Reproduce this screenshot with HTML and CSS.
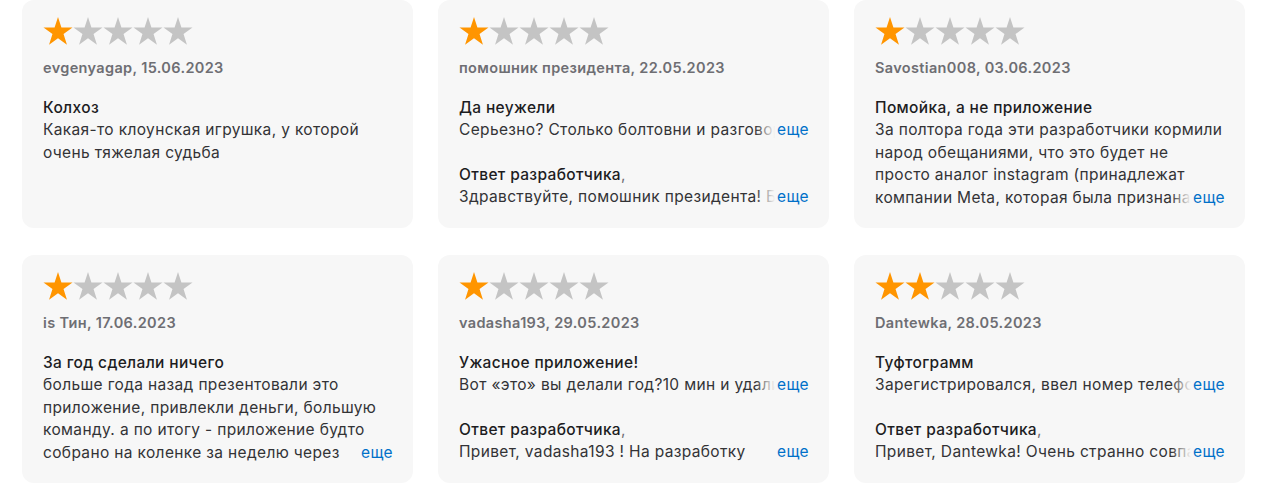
FILE: index.html
```html
<!DOCTYPE html>
<html lang="ru">
<head>
<meta charset="utf-8">
<title>Отзывы</title>
<link rel="stylesheet" href="styles.css">
</head>
<body>
<svg class="defs" width="0" height="0" aria-hidden="true">
  <defs>
    <polygon id="star" points="15,0.05 18.42,10.59 29.5,10.59 20.54,17.1 23.96,27.64 15,21.13 6.04,27.64 9.46,17.1 0.5,10.59 11.58,10.59"/>
  </defs>
</svg>
<main class="reviews">

  <article class="card">
    <div class="stars">
      <svg class="star on" viewBox="0 0 30 28"><use href="#star"/></svg>
      <svg class="star" viewBox="0 0 30 28"><use href="#star"/></svg>
      <svg class="star" viewBox="0 0 30 28"><use href="#star"/></svg>
      <svg class="star" viewBox="0 0 30 28"><use href="#star"/></svg>
      <svg class="star" viewBox="0 0 30 28"><use href="#star"/></svg>
    </div>
    <div class="author">evgenyagap, 15.06.2023</div>
    <h3 class="title">Колхоз</h3>
    <div class="body">Какая-то клоунская игрушка, у которой очень тяжелая судьба</div>
  </article>

  <article class="card">
    <div class="stars">
      <svg class="star on" viewBox="0 0 30 28"><use href="#star"/></svg>
      <svg class="star" viewBox="0 0 30 28"><use href="#star"/></svg>
      <svg class="star" viewBox="0 0 30 28"><use href="#star"/></svg>
      <svg class="star" viewBox="0 0 30 28"><use href="#star"/></svg>
      <svg class="star" viewBox="0 0 30 28"><use href="#star"/></svg>
    </div>
    <div class="author">помошник президента, 22.05.2023</div>
    <h3 class="title">Да неужели</h3>
    <div class="body clamp one">Серьезно? Столько болтовни и разговоров про это приложение<a class="more" href="#">еще</a></div>
    <h3 class="title reply">Ответ разработчика<span class="comma">,</span></h3>
    <div class="body clamp one">Здравствуйте, помошник президента! Благодарим за отзыв<a class="more" href="#">еще</a></div>
  </article>

  <article class="card">
    <div class="stars">
      <svg class="star on" viewBox="0 0 30 28"><use href="#star"/></svg>
      <svg class="star" viewBox="0 0 30 28"><use href="#star"/></svg>
      <svg class="star" viewBox="0 0 30 28"><use href="#star"/></svg>
      <svg class="star" viewBox="0 0 30 28"><use href="#star"/></svg>
      <svg class="star" viewBox="0 0 30 28"><use href="#star"/></svg>
    </div>
    <div class="author">Savostian008, 03.06.2023</div>
    <h3 class="title">Помойка, а не приложение</h3>
    <div class="body clamp four">За полтора года эти разработчики кормили народ обещаниями, что это будет не просто аналог instagram (принадлежат компании Meta, которая была признана экстремистской организацией) <a class="more" href="#">еще</a></div>
  </article>

  <article class="card">
    <div class="stars">
      <svg class="star on" viewBox="0 0 30 28"><use href="#star"/></svg>
      <svg class="star" viewBox="0 0 30 28"><use href="#star"/></svg>
      <svg class="star" viewBox="0 0 30 28"><use href="#star"/></svg>
      <svg class="star" viewBox="0 0 30 28"><use href="#star"/></svg>
      <svg class="star" viewBox="0 0 30 28"><use href="#star"/></svg>
    </div>
    <div class="author">is Тин, 17.06.2023</div>
    <h3 class="title">За год сделали ничего</h3>
    <div class="body clamp four">больше года назад презентовали это приложение, привлекли деньги, большую команду. а по итогу - приложение будто собрано на коленке за неделю через неработающие сервисы <a class="more" href="#">еще</a></div>
  </article>

  <article class="card">
    <div class="stars">
      <svg class="star on" viewBox="0 0 30 28"><use href="#star"/></svg>
      <svg class="star" viewBox="0 0 30 28"><use href="#star"/></svg>
      <svg class="star" viewBox="0 0 30 28"><use href="#star"/></svg>
      <svg class="star" viewBox="0 0 30 28"><use href="#star"/></svg>
      <svg class="star" viewBox="0 0 30 28"><use href="#star"/></svg>
    </div>
    <div class="author">vadasha193, 29.05.2023</div>
    <h3 class="title">Ужасное приложение!</h3>
    <div class="body clamp one">Вот «это» вы делали год?10 мин и удалил приложение<a class="more" href="#">еще</a></div>
    <h3 class="title reply">Ответ разработчика<span class="comma">,</span></h3>
    <div class="body clamp onewrap">Привет, vadasha193 ! На разработку приложения ушло много времени <a class="more" href="#">еще</a></div>
  </article>

  <article class="card">
    <div class="stars">
      <svg class="star on" viewBox="0 0 30 28"><use href="#star"/></svg>
      <svg class="star on" viewBox="0 0 30 28"><use href="#star"/></svg>
      <svg class="star" viewBox="0 0 30 28"><use href="#star"/></svg>
      <svg class="star" viewBox="0 0 30 28"><use href="#star"/></svg>
      <svg class="star" viewBox="0 0 30 28"><use href="#star"/></svg>
    </div>
    <div class="author">Dantewka, 28.05.2023</div>
    <h3 class="title">Туфтограмм</h3>
    <div class="body clamp one">Зарегистрировался, ввел номер телефона и ничего не пришло<a class="more" href="#">еще</a></div>
    <h3 class="title reply">Ответ разработчика<span class="comma">,</span></h3>
    <div class="body clamp one">Привет, Dantewka! Очень странно совпадение, давайте разберемся<a class="more" href="#">еще</a></div>
  </article>

</main>
</body>
</html>
```

FILE: styles.css
```css
* {
  box-sizing: border-box;
}

html, body {
  margin: 0;
  padding: 0;
  background: #ffffff;
}

body {
  font-family: Inter, "Noto Sans", "Liberation Sans", sans-serif;
  color: #1d1d1f;
  letter-spacing: 0.35px;
  -webkit-font-smoothing: antialiased;
}

.defs {
  position: absolute;
  width: 0;
  height: 0;
  overflow: hidden;
}

.reviews {
  display: grid;
  grid-template-columns: repeat(3, 391px);
  grid-auto-rows: 228px;
  column-gap: 25px;
  row-gap: 27px;
  padding: 0 0 0 22px;
}

.card {
  background: #f7f7f7;
  border-radius: 12px;
  padding: 17px 20px 0 21px;
  overflow: hidden;
}

.stars {
  display: flex;
  height: 28px;
}

.star {
  width: 30px;
  height: 28px;
  display: block;
  fill: #c4c4c4;
}

.star.on {
  fill: #ff9500;
}

.author {
  margin-top: 13px;
  font-size: 14.5px;
  line-height: 20px;
  font-weight: 600;
  color: #6e6e73;
}

.title {
  margin: 19px 0 0;
  font-size: 15.5px;
  line-height: 22px;
  font-weight: 500;
  color: #1d1d1f;
}

.title.reply {
  margin-top: 22px;
}

.title .comma {
  font-weight: 400;
  color: #6e6e73;
}

.body {
  font-size: 15.5px;
  line-height: 22.5px;
  color: #333336;
  position: relative;
}

.clamp {
  overflow: hidden;
}

.clamp.one {
  white-space: nowrap;
  height: 22.5px;
}

.clamp.onewrap {
  height: 22.5px;
}

.clamp.four {
  height: 90px;
}

.more {
  position: absolute;
  right: 0;
  bottom: 0;
  padding-left: 22px;
  background: linear-gradient(to right, rgba(247, 247, 247, 0) 0, #f7f7f7 20px);
  color: #0070c9;
  text-decoration: none;
  line-height: 22.5px;
}
```
